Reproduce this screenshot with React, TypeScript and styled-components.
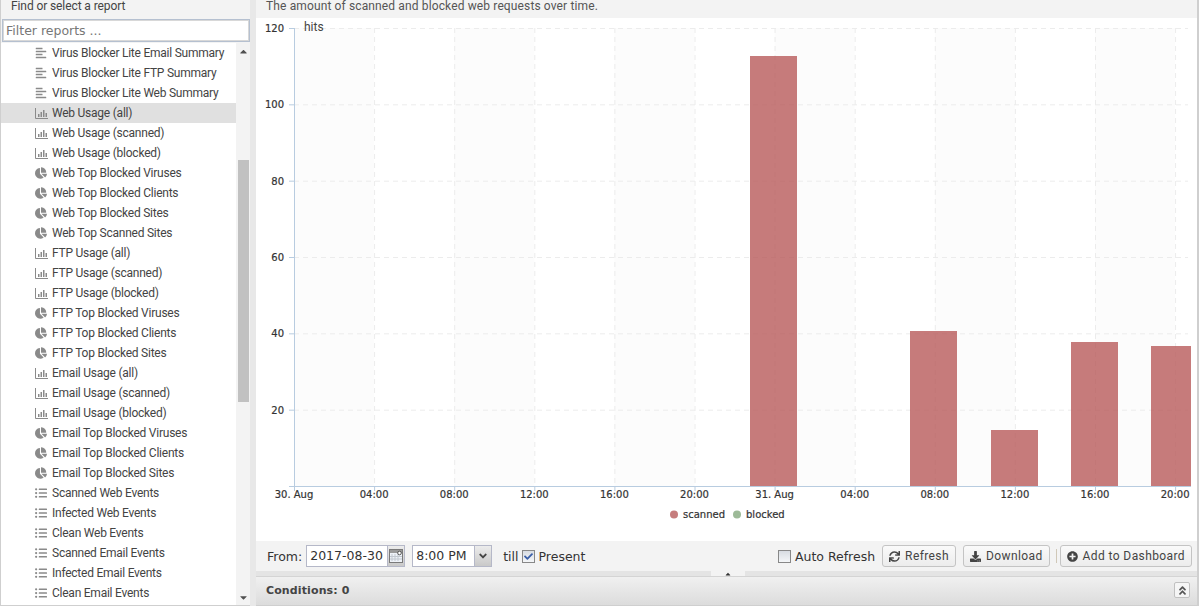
import React from 'react';
import styled, { createGlobalStyle } from 'styled-components';
import { FaSync, FaDownload, FaPlusCircle, FaChartPie, FaListUl, FaAlignLeft, FaCaretUp, FaCaretDown, FaCheck, FaAngleDown, FaAngleDoubleUp } from 'react-icons/fa';

type Kind = 'text' | 'bar' | 'pie' | 'list';

const reports: { name: string; kind: Kind; active?: boolean }[] = [
  { name: 'Virus Blocker Lite Email Summary', kind: 'text' },
  { name: 'Virus Blocker Lite FTP Summary', kind: 'text' },
  { name: 'Virus Blocker Lite Web Summary', kind: 'text' },
  { name: 'Web Usage (all)', kind: 'bar', active: true },
  { name: 'Web Usage (scanned)', kind: 'bar' },
  { name: 'Web Usage (blocked)', kind: 'bar' },
  { name: 'Web Top Blocked Viruses', kind: 'pie' },
  { name: 'Web Top Blocked Clients', kind: 'pie' },
  { name: 'Web Top Blocked Sites', kind: 'pie' },
  { name: 'Web Top Scanned Sites', kind: 'pie' },
  { name: 'FTP Usage (all)', kind: 'bar' },
  { name: 'FTP Usage (scanned)', kind: 'bar' },
  { name: 'FTP Usage (blocked)', kind: 'bar' },
  { name: 'FTP Top Blocked Viruses', kind: 'pie' },
  { name: 'FTP Top Blocked Clients', kind: 'pie' },
  { name: 'FTP Top Blocked Sites', kind: 'pie' },
  { name: 'Email Usage (all)', kind: 'bar' },
  { name: 'Email Usage (scanned)', kind: 'bar' },
  { name: 'Email Usage (blocked)', kind: 'bar' },
  { name: 'Email Top Blocked Viruses', kind: 'pie' },
  { name: 'Email Top Blocked Clients', kind: 'pie' },
  { name: 'Email Top Blocked Sites', kind: 'pie' },
  { name: 'Scanned Web Events', kind: 'list' },
  { name: 'Infected Web Events', kind: 'list' },
  { name: 'Clean Web Events', kind: 'list' },
  { name: 'Scanned Email Events', kind: 'list' },
  { name: 'Infected Email Events', kind: 'list' },
  { name: 'Clean Email Events', kind: 'list' }
];

const xLabels = ['30. Aug', '04:00', '08:00', '12:00', '16:00', '20:00', '31. Aug', '04:00', '08:00', '12:00', '16:00', '20:00'];
const yLabels = [120, 100, 80, 60, 40, 20];
const bars = [
  { x: 750, w: 47, top: 56 },
  { x: 910, w: 47, top: 331 },
  { x: 991, w: 47, top: 430 },
  { x: 1071, w: 47, top: 342 },
  { x: 1151, w: 40, top: 346 }
];

// chart coordinates follow the page, the svg starts at x=256 y=18
const OX = 256;
const OY = 18;
const BASE = 486;
const yAt = (v: number) => BASE - (v * 458) / 120;
const xAt = (i: number) => 294 + i * 80.1;

const BarsIcon = () => (
  <svg width="13" height="12" viewBox="0 0 13 12">
    <path d="M0.5 1v10.5H13" fill="none" stroke="#8a8a8a" />
    <path d="M3 7h1.5v3H3zM5.5 5h1.5v5H5.5zM8 3h1.5v7H8zM10.5 6H12v4h-1.5z" fill="#8a8a8a" />
  </svg>
);

const ReportIcon = ({ kind }: { kind: Kind }) => {
  if (kind === 'bar') return <BarsIcon />;
  if (kind === 'pie') return <FaChartPie size={12} />;
  if (kind === 'list') return <FaListUl size={12} />;
  return <FaAlignLeft size={12} />;
};

const App = () => (
  <>
    <GlobalStyle />
    <Layout>
      <Sidebar>
        <SidebarTitle>Find or select a report</SidebarTitle>
        <FilterInput placeholder="Filter reports ..." readOnly />
        <ReportPane>
          <ReportList>
            {reports.map((r) => (
              <ReportRow key={r.name} $active={r.active}>
                <IconSlot>
                  <ReportIcon kind={r.kind} />
                </IconSlot>
                {r.name}
              </ReportRow>
            ))}
          </ReportList>
          <ScrollTrack>
            <ScrollArrow><FaCaretUp size={11} /></ScrollArrow>
            <ScrollArea>
              <ScrollThumb />
            </ScrollArea>
            <ScrollArrow><FaCaretDown size={11} /></ScrollArrow>
          </ScrollTrack>
        </ReportPane>
      </Sidebar>
      <Main>
        <Description>The amount of scanned and blocked web requests over time.</Description>
        <ChartArea>
          <svg width="941" height="523" viewBox={`${OX} ${OY} 941 523`}>
            {xLabels.slice(0, 11).map((_, i) =>
              i % 2 === 0 ? <rect key={i} x={xAt(i)} y={28} width={80.1} height={BASE - 28} fill="#fcfcfc" /> : null
            )}
            {yLabels.map((v) => (
              <line key={v} x1={294} x2={1188} y1={yAt(v) + 0.5} y2={yAt(v) + 0.5} stroke="#ececec" strokeDasharray="5 4" />
            ))}
            {xLabels.map((_, i) =>
              i > 0 ? <line key={i} x1={xAt(i) + 0.5} x2={xAt(i) + 0.5} y1={28} y2={BASE} stroke="#ececec" strokeDasharray="5 4" /> : null
            )}
            {bars.map((b) => (
              <rect key={b.x} x={b.x} y={b.top} width={b.w} height={BASE - b.top} fill="#b85a5a" opacity={0.8} />
            ))}
            <line x1={294.5} x2={294.5} y1={28} y2={491} stroke="#b8cce0" />
            <line x1={289} x2={1191} y1={486.5} y2={486.5} stroke="#b8cce0" />
            {yLabels.map((v) => (
              <g key={v}>
                <line x1={289} x2={294} y1={yAt(v) + 0.5} y2={yAt(v) + 0.5} stroke="#b8cce0" />
                <AxisText x={284} y={yAt(v) + 4} textAnchor="end">{v}</AxisText>
              </g>
            ))}
            {xLabels.map((l, i) => (
              <g key={i}>
                <line x1={xAt(i) + 0.5} x2={xAt(i) + 0.5} y1={486} y2={491} stroke="#b8cce0" />
                <AxisText x={i === 0 ? 294 : xAt(i)} y={498} textAnchor="middle">{l}</AxisText>
              </g>
            ))}
            <HitsText x={304} y={31}>hits</HitsText>
            <circle cx={674} cy={514.5} r={4} fill="#c67d7d" />
            <AxisText x={683} y={518}>scanned</AxisText>
            <circle cx={737} cy={514.5} r={4} fill="#9dba98" />
            <AxisText x={746} y={518}>blocked</AxisText>
          </svg>
        </ChartArea>
        <Toolbar>
          <FromLabel>From:</FromLabel>
          <Field>
            <FieldText $width={80}>2017-08-30</FieldText>
            <FieldTrigger>
              <svg width="14" height="14" viewBox="0 0 14 14">
                <rect x="0.5" y="0.5" width="13" height="13" fill="#eef2f8" stroke="#7a7a7a" />
                <rect x="1" y="1" width="12" height="3" fill="#9a9a9a" />
                <path d="M3 5v7M6 5v7M9 5v7M1 7.5h12M1 10h12" stroke="#c2c8d0" />
                <circle cx="10.5" cy="4" r="1.8" fill="#fff" stroke="#555" />
              </svg>
            </FieldTrigger>
          </Field>
          <Field>
            <FieldText $width={61}>8:00 PM</FieldText>
            <FieldTrigger><FaAngleDown size={12} color="#444" /></FieldTrigger>
          </Field>
          <TillLabel>till</TillLabel>
          <CheckBox $checked><FaCheck size={9} color="#3b5fa8" /></CheckBox>
          <Label>Present</Label>
          <ToolbarSpacer />
          <CheckBox />
          <Label>Auto Refresh</Label>
          <ToolButton><FaSync size={11} />Refresh</ToolButton>
          <ToolButton><FaDownload size={11} />Download</ToolButton>
          <ToolSeparator />
          <ToolButton><FaPlusCircle size={11} />Add to Dashboard</ToolButton>
        </Toolbar>
        <SplitBar><SplitHandle><FaCaretUp size={8} /></SplitHandle></SplitBar>
        <Conditions>
          <ConditionsTitle>Conditions: 0</ConditionsTitle>
          <CollapseButton><FaAngleDoubleUp size={11} /></CollapseButton>
        </Conditions>
      </Main>
    </Layout>
  </>
);

const GlobalStyle = createGlobalStyle`
  html, body {
    margin: 0;
    height: 100%;
    overflow: hidden;
    background: #e8e8e8;
  }
  #root {
    height: 100%;
  }
`;

const Layout = styled.div`
  display: flex;
  height: 606px;
  width: 1199px;
  overflow: hidden;
  font-family: Roboto, "Liberation Sans", sans-serif;
`;

const Sidebar = styled.div`
  width: 250px;
  flex: none;
  display: flex;
  flex-direction: column;
  background: #f3f3f3;
  border-left: 1px solid #cfcfcf;
  box-sizing: border-box;
`;

const SidebarTitle = styled.div`
  height: 18px;
  padding-left: 10px;
  font-size: 12px;
  line-height: 12px;
  color: #444;
  letter-spacing: -0.1px;
`;

const FilterInput = styled.input`
  width: 248px;
  height: 23px;
  margin: 1px 0 1px 1px;
  padding: 0 3px;
  box-sizing: border-box;
  border: 1px solid #b5c0d0;
  outline: 1px solid #d8d8d8;
  outline-offset: -2px;
  font-family: "DejaVu Sans", sans-serif;
  font-size: 12.5px;
  color: #555;
  background: #fff;
  &::placeholder {
    color: #777;
    opacity: 1;
  }
`;

const ReportPane = styled.div`
  flex: 1;
  min-height: 0;
  display: flex;
  background: #fff;
  border-bottom: 1px solid #cfcfcf;
  overflow: hidden;
`;

const ReportList = styled.div`
  width: 235px;
  flex: none;
  overflow: hidden;
`;

const ReportRow = styled.div<{ $active?: boolean }>`
  height: 20px;
  display: flex;
  align-items: center;
  padding-left: 34px;
  font-size: 12px;
  letter-spacing: -0.24px;
  color: #444;
  white-space: nowrap;
  background: ${(p) => (p.$active ? '#e0e0e0' : 'transparent')};
`;

const IconSlot = styled.span`
  width: 17px;
  flex: none;
  display: flex;
  align-items: center;
  color: #8a8a8a;
`;

const ScrollTrack = styled.div`
  width: 14px;
  flex: none;
  display: flex;
  flex-direction: column;
  background: #f3f3f3;
`;

const ScrollArrow = styled.div`
  height: 16px;
  flex: none;
  display: flex;
  align-items: center;
  justify-content: center;
  color: #505050;
`;

const ScrollArea = styled.div`
  flex: 1;
  padding-top: 101px;
`;

const ScrollThumb = styled.div`
  width: 11px;
  height: 242px;
  margin-left: 2px;
  background: #c1c1c1;
`;

const Main = styled.div`
  margin-left: 6px;
  flex: 1;
  min-width: 0;
  display: flex;
  flex-direction: column;
  background: #fff;
  border-right: 2px solid #cfcfcf;
`;

const Description = styled.div`
  height: 18px;
  flex: none;
  padding-left: 10px;
  font-size: 12px;
  line-height: 12px;
  color: #555;
  background: #f3f3f3;
  letter-spacing: 0.13px;
`;

const ChartArea = styled.div`
  height: 523px;
  flex: none;
  svg {
    display: block;
  }
`;

const AxisText = styled.text`
  font-family: "DejaVu Sans", sans-serif;
  font-size: 10px;
  font-weight: 400;
  fill: #333;
  stroke: #333;
  stroke-width: 0.2px;
`;

const HitsText = styled.text`
  font-family: Roboto, sans-serif;
  font-size: 12px;
  fill: #444;
`;

const Toolbar = styled.div`
  height: 30px;
  flex: none;
  display: flex;
  align-items: center;
  padding: 0 5px 0 11px;
  background: #f3f3f3;
  box-sizing: border-box;
`;

const Label = styled.span`
  font-family: "DejaVu Sans", sans-serif;
  font-size: 12.5px;
  color: #333;
  margin-right: 7px;
`;

const FromLabel = styled(Label)`
  margin-right: 4px;
`;

const TillLabel = styled(Label)`
  margin-left: 4px;
  margin-right: 3px;
`;

const Field = styled.div`
  display: flex;
  height: 22px;
  margin-right: 7px;
  border: 1px solid #b5b8c8;
  box-sizing: border-box;
  background: #fff;
`;

const FieldText = styled.span<{ $width: number }>`
  width: ${(p) => p.$width}px;
  padding-left: 3px;
  box-sizing: border-box;
  font-family: "DejaVu Sans", sans-serif;
  font-size: 12.5px;
  line-height: 20px;
  color: #333;
`;

const FieldTrigger = styled.span`
  width: 16px;
  display: flex;
  align-items: center;
  justify-content: center;
  background: linear-gradient(#ececec, #c9c9c9);
  border-left: 1px solid #b5b8c8;
`;

const CheckBox = styled.span<{ $checked?: boolean }>`
  width: 13px;
  height: 13px;
  margin-right: 4px;
  display: flex;
  align-items: center;
  justify-content: center;
  box-sizing: border-box;
  border: 1px solid #888;
  background: linear-gradient(#d8dce2, #f4f6f8);
`;

const ToolbarSpacer = styled.div`
  flex: 1;
`;

const ToolButton = styled.button`
  height: 22px;
  display: flex;
  align-items: center;
  gap: 5px;
  margin-right: 7px;
  padding: 0 6px;
  border: 1px solid #c4c4c4;
  border-radius: 3px;
  background: linear-gradient(#fafafa, #ececec);
  font-family: Roboto, sans-serif;
  font-size: 12px;
  letter-spacing: 0.4px;
  color: #444;
  &:last-child {
    margin-right: 0;
  }
`;

const ToolSeparator = styled.span`
  width: 1px;
  height: 14px;
  margin-right: 3px;
  margin-left: -1px;
  background: #d0c8b8;
`;

const SplitBar = styled.div`
  height: 5px;
  flex: none;
  position: relative;
  background: #e4e4e4;
`;

const SplitHandle = styled.div`
  position: absolute;
  left: 455px;
  top: 0;
  width: 34px;
  height: 5px;
  display: flex;
  align-items: center;
  justify-content: center;
  background: #f3f3f3;
  color: #333;
`;

const Conditions = styled.div`
  flex: 1;
  display: flex;
  align-items: center;
  justify-content: space-between;
  padding: 0 7px 2px 10px;
  background: linear-gradient(#f0f0f0, #dcdcdc);
  border-top: 1px solid #d4d4d4;
  border-bottom: 1px solid #cfcfcf;
`;

const ConditionsTitle = styled.span`
  font-family: "DejaVu Sans", sans-serif;
  font-size: 11px;
  font-weight: 700;
  letter-spacing: 0.12px;
  color: #444;
`;

const CollapseButton = styled.span`
  width: 14px;
  height: 14px;
  display: flex;
  align-items: center;
  justify-content: center;
  border: 1px solid #c0c0c0;
  border-radius: 2px;
  background: #f5f5f5;
  color: #555;
`;

export default App;
